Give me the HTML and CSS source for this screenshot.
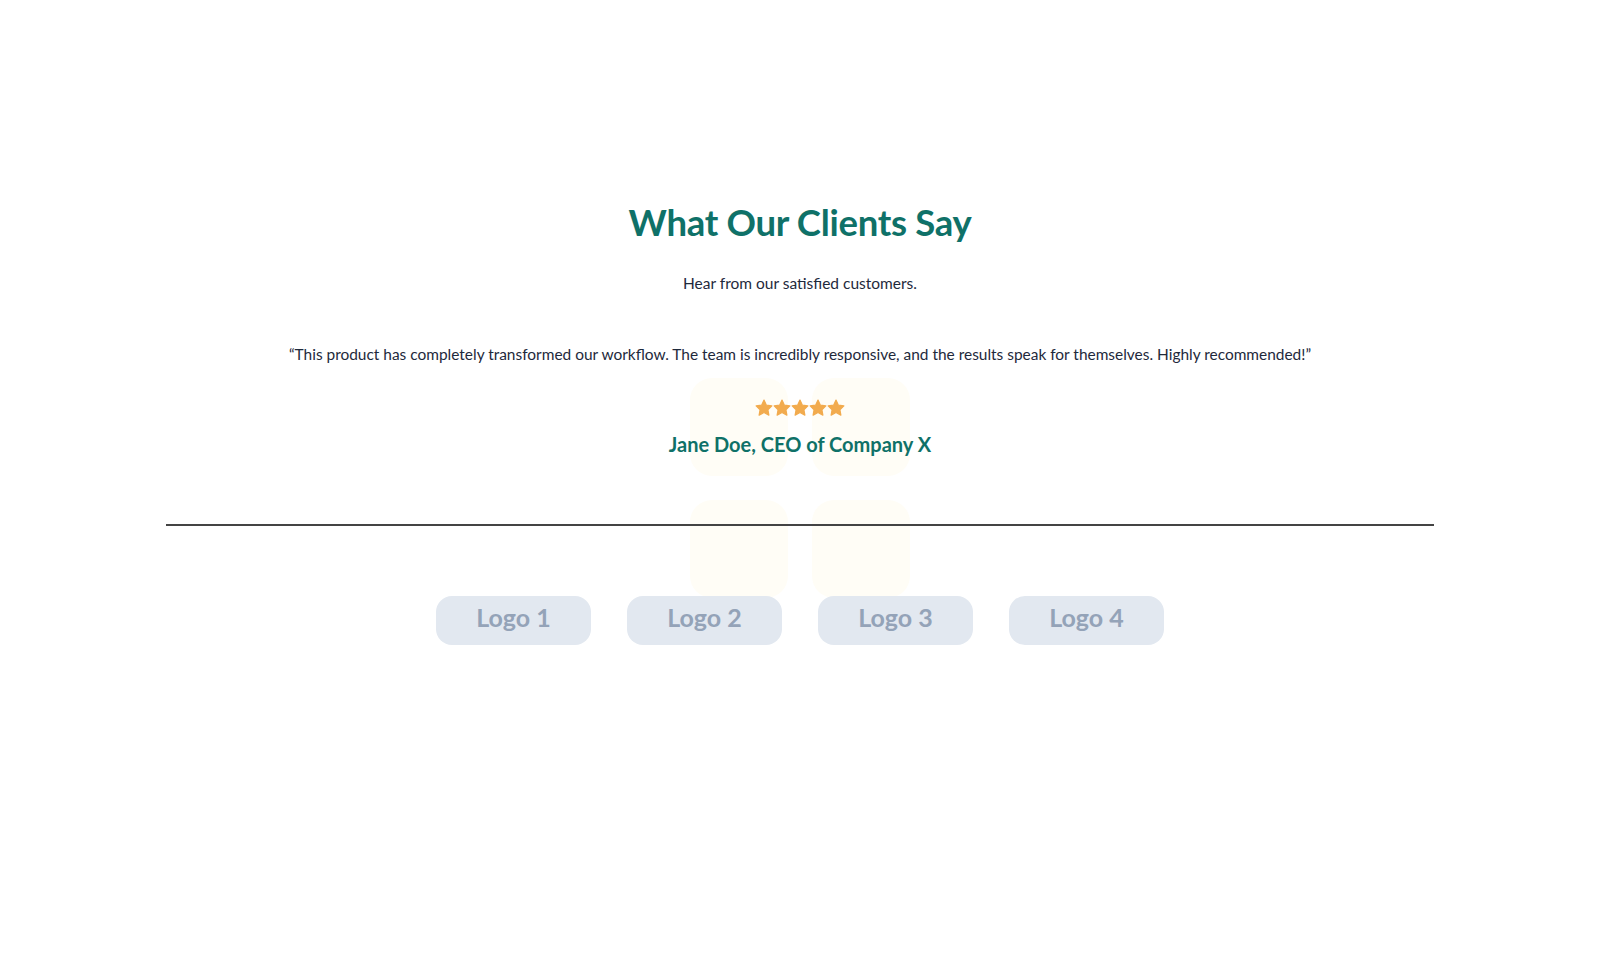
FILE: index.html
```html
<!DOCTYPE html>
<html lang="en">
<head>
<meta charset="utf-8">
<title>What Our Clients Say</title>
<link rel="stylesheet" href="styles.css">
</head>
<body>
<section class="testimonials">
  <div class="deco" aria-hidden="true">
    <span></span><span></span><span></span><span></span>
  </div>
  <h2 class="title">What Our Clients Say</h2>
  <p class="subtitle">Hear from our satisfied customers.</p>
  <blockquote class="quote">“This product has completely transformed our workflow. The team is incredibly responsive, and the results speak for themselves. Highly recommended!”</blockquote>
  <div class="stars" aria-label="5 stars">
    <svg viewBox="0 0 24 24"><path d="M12 1.5l3.2 6.7 7.3 1-5.3 5.1 1.3 7.3L12 18.1l-6.5 3.5 1.3-7.3-5.3-5.1 7.3-1z"/></svg>
    <svg viewBox="0 0 24 24"><path d="M12 1.5l3.2 6.7 7.3 1-5.3 5.1 1.3 7.3L12 18.1l-6.5 3.5 1.3-7.3-5.3-5.1 7.3-1z"/></svg>
    <svg viewBox="0 0 24 24"><path d="M12 1.5l3.2 6.7 7.3 1-5.3 5.1 1.3 7.3L12 18.1l-6.5 3.5 1.3-7.3-5.3-5.1 7.3-1z"/></svg>
    <svg viewBox="0 0 24 24"><path d="M12 1.5l3.2 6.7 7.3 1-5.3 5.1 1.3 7.3L12 18.1l-6.5 3.5 1.3-7.3-5.3-5.1 7.3-1z"/></svg>
    <svg viewBox="0 0 24 24"><path d="M12 1.5l3.2 6.7 7.3 1-5.3 5.1 1.3 7.3L12 18.1l-6.5 3.5 1.3-7.3-5.3-5.1 7.3-1z"/></svg>
  </div>
  <p class="author">Jane Doe, CEO of Company X</p>
  <hr class="divider">
  <div class="logos">
    <div class="logo">Logo 1</div>
    <div class="logo">Logo 2</div>
    <div class="logo">Logo 3</div>
    <div class="logo">Logo 4</div>
  </div>
</section>
</body>
</html>
```
FILE: styles.css
```css
html, body {
  margin: 0;
  padding: 0;
  background: #ffffff;
}
body {
  font-family: "Lato", "Noto Sans", sans-serif;
  color: #1e293b;
}
.testimonials {
  position: relative;
  width: 1268px;
  margin: 0 auto;
  padding-top: 200px;
  display: flex;
  flex-direction: column;
  align-items: center;
}
.deco {
  position: absolute;
  top: 378px;
  left: 524px;
  display: grid;
  grid-template-columns: 98px 98px;
  grid-auto-rows: 98px;
  gap: 24px;
  z-index: 0;
}
.deco span {
  background: #fffdf6;
  border-radius: 22px;
}
.title, .subtitle, .quote, .stars, .author, .divider, .logos {
  position: relative;
  z-index: 1;
}
.title {
  margin: 0;
  font-size: 36.5px;
  line-height: 44px;
  font-weight: 700;
  color: #0f7168;
  letter-spacing: -0.3px;
}
.subtitle {
  margin: 27px 0 0;
  font-size: 15.5px;
  line-height: 24px;
}
.quote {
  margin: 47px 0 0;
  font-size: 15.45px;
  line-height: 24px;
  text-align: center;
}
.stars {
  margin-top: 33px;
  display: flex;
  height: 18px;
}
.stars svg {
  width: 18px;
  height: 18px;
  fill: #f2ab4e;
  stroke: #f2ab4e;
  stroke-width: 1.6;
  stroke-linejoin: round;
  overflow: visible;
}
.author {
  margin: 13px 0 0;
  font-size: 20px;
  line-height: 28px;
  font-weight: 700;
  color: #0f7168;
}
.divider {
  align-self: stretch;
  margin: 66px 0 0;
  border: 0;
  height: 2px;
  background: #444444;
}
.logos {
  margin-top: 70px;
  display: flex;
  gap: 36px;
}
.logo {
  width: 155px;
  height: 49px;
  border-radius: 16px;
  background: #e2e8f0;
  color: #94a3b8;
  font-family: "Lato", sans-serif;
  font-weight: 700;
  font-size: 25px;
  display: flex;
  align-items: center;
  justify-content: center;
  padding-bottom: 7px;
  box-sizing: border-box;
}
```
